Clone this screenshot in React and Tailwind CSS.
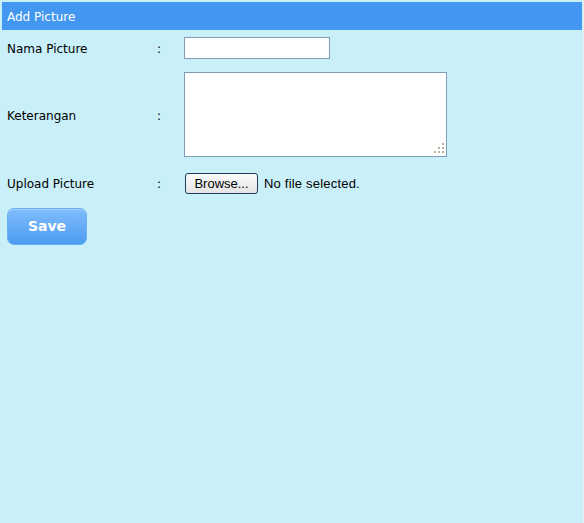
export default function App() {
  return (
    <div className="w-[584px] h-[523px] bg-[#c9eff9] pt-[2px] pl-[2px] pr-[1px] border-r border-[#e6eef0] font-['DejaVu_Sans',sans-serif] text-[12px] text-black overflow-hidden">
      {/* Header */}
      <div className="h-[28px] bg-[#4397f0] text-white flex items-center pl-[5px] pt-[1px]">
        Add Picture
      </div>

      {/* Form */}
      <div className="pl-[5px] mt-[7px]">
        <div className="grid grid-cols-[150px_27px_1fr] items-center h-[22px]">
          <span className="pt-[2px]">Nama Picture</span>
          <span className="pt-[2px]">:</span>
          <input
            type="text"
            className="w-[146px] h-[22px] bg-white border border-[#7f9db9] outline-none"
          />
        </div>

        <div className="grid grid-cols-[150px_27px_1fr] items-center mt-[13px] h-[85px]">
          <span className="pt-[2px]">Keterangan</span>
          <span className="pt-[2px]">:</span>
          <div className="relative w-[263px] h-[85px]">
            <textarea className="w-full h-full bg-white border border-[#7f9db9] outline-none resize-none block" />
            <svg
              className="absolute right-[3px] bottom-[4px]"
              width="10"
              height="10"
              viewBox="0 0 10 10"
              fill="#b8b3a0"
            >
              <rect x="8" y="0" width="2" height="2" />
              <rect x="4" y="4" width="2" height="2" />
              <rect x="8" y="4" width="2" height="2" />
              <rect x="0" y="8" width="2" height="2" />
              <rect x="4" y="8" width="2" height="2" />
              <rect x="8" y="8" width="2" height="2" />
            </svg>
          </div>
        </div>

        <div className="grid grid-cols-[150px_27px_1fr] items-center mt-[16px] h-[21px]">
          <span className="pt-[1px]">Upload Picture</span>
          <span className="pt-[1px]">:</span>
          <div className="flex items-center">
            <button className="ml-[1px] w-[73px] h-[21px] rounded-[3px] border border-[#1e3c5c] bg-gradient-to-b from-[#fbfbfb] to-[#e4e4e4] font-['Liberation_Sans',sans-serif] text-[13px] leading-none text-black">
              Browse...
            </button>
            <span className="ml-[6px] font-['Liberation_Sans',sans-serif] text-[13px] tracking-[0.2px]">
              No file selected.
            </span>
          </div>
        </div>

        <button className="mt-[14px] w-[80px] h-[37px] rounded-[7px] border border-[#6aaef5] bg-gradient-to-b from-[#80bcfb] to-[#4a9bf0] text-white font-bold text-[14px] shadow-[inset_0_1px_0_rgba(255,255,255,0.3)]">
          Save
        </button>
      </div>
    </div>
  );
}
